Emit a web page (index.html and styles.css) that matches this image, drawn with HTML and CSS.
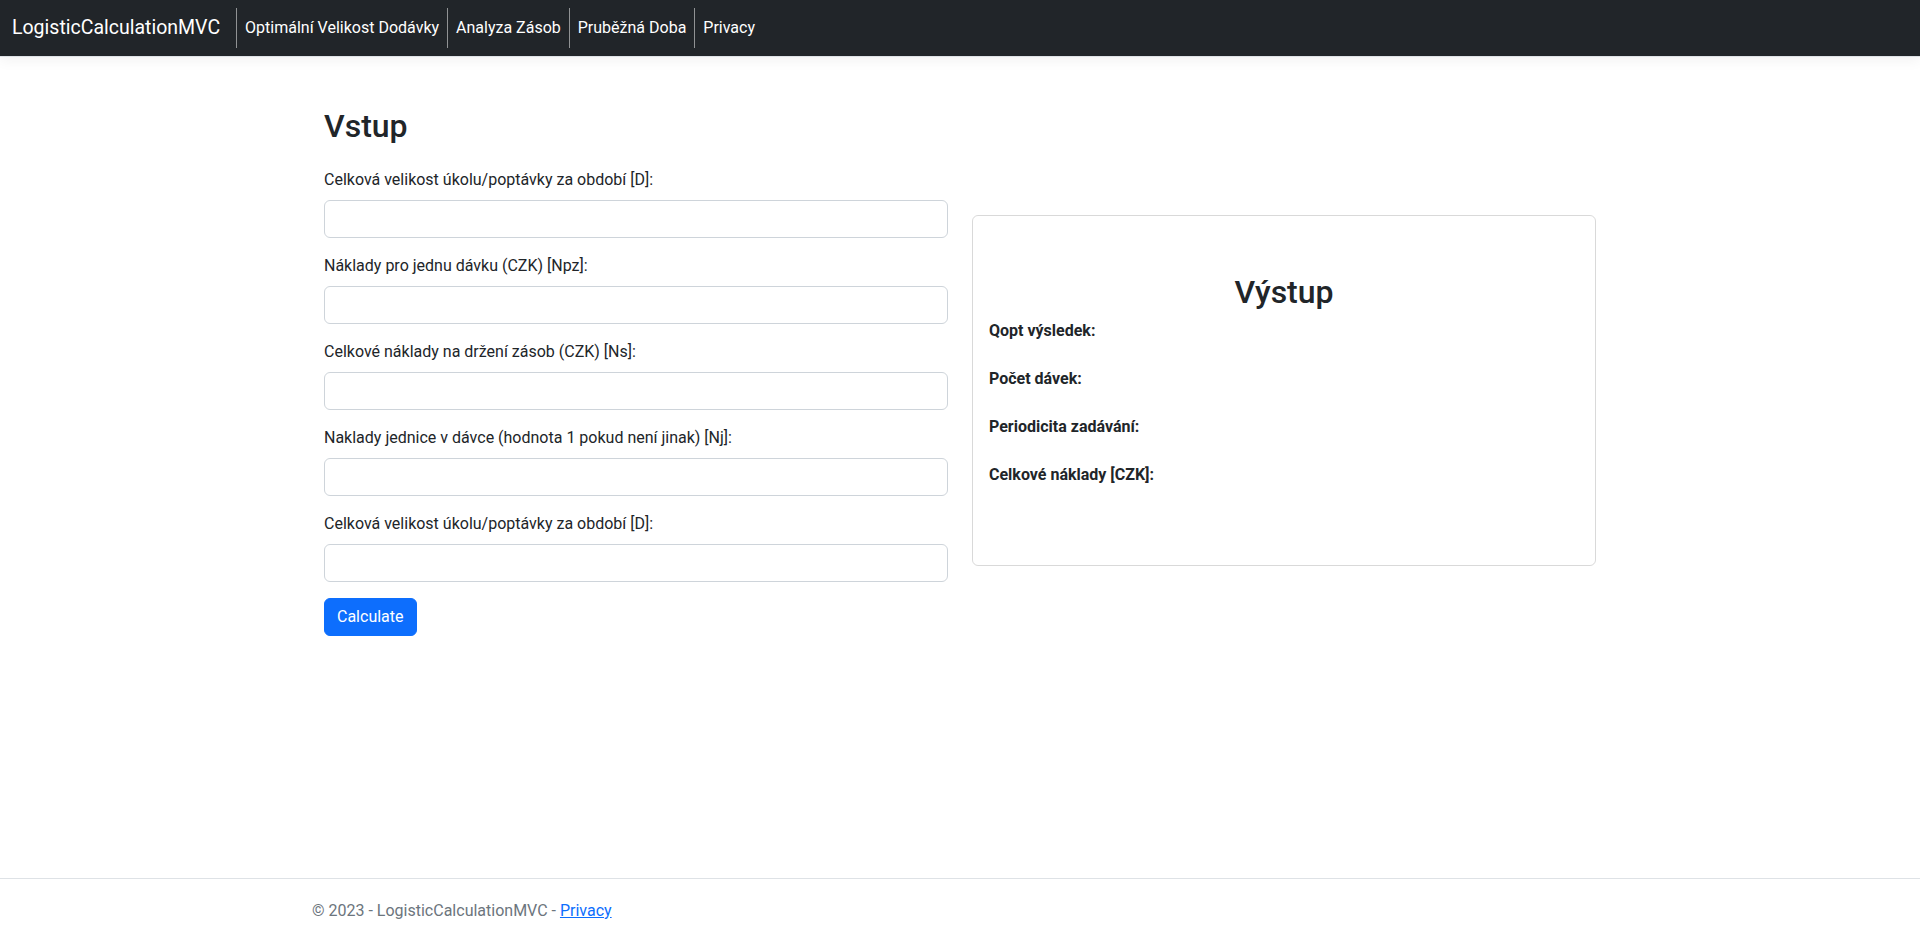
FILE: index.html
```html
<!DOCTYPE html>
<html lang="cs">
<head>
<meta charset="utf-8">
<title>LogisticCalculationMVC</title>
<link rel="stylesheet" href="styles.css">
</head>
<body>
<header class="navbar">
  <div class="navbar-inner">
    <a class="brand" href="#">LogisticCalculationMVC</a>
    <nav class="nav-links">
      <a class="nav-link" href="#">Optimální Velikost Dodávky</a>
      <a class="nav-link" href="#">Analyza Zásob</a>
      <a class="nav-link" href="#">Pruběžná Doba</a>
      <a class="nav-link" href="#">Privacy</a>
    </nav>
  </div>
</header>

<main class="container">
  <div class="row">
    <form class="input-col">
      <h2 class="title">Vstup</h2>
      <div class="group">
        <label class="label">Celková velikost úkolu/poptávky za období [D]:</label>
        <input class="control" type="text">
      </div>
      <div class="group">
        <label class="label">Náklady pro jednu dávku (CZK) [Npz]:</label>
        <input class="control" type="text">
      </div>
      <div class="group">
        <label class="label">Celkové náklady na držení zásob (CZK) [Ns]:</label>
        <input class="control" type="text">
      </div>
      <div class="group">
        <label class="label">Naklady jednice v dávce (hodnota 1 pokud není jinak) [Nj]:</label>
        <input class="control" type="text">
      </div>
      <div class="group">
        <label class="label">Celková velikost úkolu/poptávky za období [D]:</label>
        <input class="control" type="text">
      </div>
      <button class="btn" type="button">Calculate</button>
    </form>

    <section class="card">
      <h2 class="card-title">Výstup</h2>
      <div class="result"><strong>Qopt výsledek:</strong></div>
      <div class="result"><strong>Počet dávek:</strong></div>
      <div class="result"><strong>Periodicita zadávání:</strong></div>
      <div class="result"><strong>Celkové náklady [CZK]:</strong></div>
    </section>
  </div>
</main>

<footer class="footer">
  <div class="footer-inner">© 2023 - LogisticCalculationMVC - <a class="footer-link" href="#">Privacy</a></div>
</footer>
</body>
</html>
```

FILE: styles.css
```css
* { box-sizing: border-box; }

html, body { height: 100%; }

body {
  margin: 0;
  min-height: 100vh;
  display: flex;
  flex-direction: column;
  font-family: Roboto, "Liberation Sans", sans-serif;
  font-size: 16px;
  line-height: 24px;
  color: #212529;
  background: #fff;
}

a { text-decoration: none; }

.navbar {
  background: #212529;
  padding: 8px 0;
  border-bottom: 1px solid #dee2e6;
  box-shadow: 0 4px 12px rgba(0, 0, 0, 0.05);
  margin-bottom: 16px;
}

.navbar-inner {
  display: flex;
  align-items: center;
  padding: 0 12px;
}

.brand {
  color: #fff;
  font-size: 19.5px;
  line-height: 30px;
  padding: 5px 0;
  margin-right: 16px;
}

.nav-links {
  display: flex;
}

.nav-link {
  color: #fff;
  line-height: 24px;
  padding: 8px 8px;
  border-left: 1px solid rgba(255, 255, 255, 0.5);
}

.container {
  width: 1320px;
  margin: 0 auto;
  padding: 0 12px;
}

.row {
  display: grid;
  grid-template-columns: 1fr 1fr;
  column-gap: 24px;
  padding: 0 12px;
  align-items: start;
}

.input-col {
  padding-top: 34px;
}

.title {
  font-size: 32px;
  font-weight: 500;
  line-height: 38.4px;
  margin: 0 0 23px;
}

.group {
  margin-bottom: 16px;
}

.label {
  display: block;
  margin-bottom: 8px;
}

.control {
  display: block;
  width: 100%;
  height: 38px;
  padding: 6px 12px;
  font: inherit;
  color: #212529;
  background: #fff;
  border: 1px solid #ced4da;
  border-radius: 6px;
}

.btn {
  font: inherit;
  color: #fff;
  background: #0d6efd;
  border: 1px solid #0d6efd;
  border-radius: 6px;
  padding: 6px 12px;
  line-height: 24px;
}

.card {
  margin-top: 142px;
  border: 1px solid rgba(0, 0, 0, 0.15);
  border-radius: 6px;
  padding: 57px 16px 54px;
}

.card-title {
  font-size: 32px;
  font-weight: 500;
  line-height: 38.4px;
  text-align: center;
  margin: 0 0 8px;
}

.result {
  line-height: 24px;
  margin-bottom: 24px;
}

.result strong {
  font-weight: 700;
}

.footer {
  margin-top: auto;
  border-top: 1px solid #dee2e6;
  color: #6c757d;
  line-height: 57px;
  padding-top: 3px;
  white-space: nowrap;
}

.footer-inner {
  width: 1320px;
  margin: 0 auto;
  padding: 0 12px;
}

.footer-link {
  color: #0d6efd;
  text-decoration: underline;
}
```
